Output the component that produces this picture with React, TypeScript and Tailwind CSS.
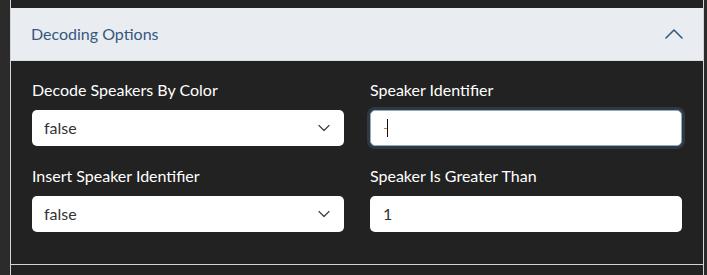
import { ChevronDown, ChevronUp } from "lucide-react";

function SelectField({ label, value }: { label: string; value: string }) {
  return (
    <div className="flex flex-col">
      <label className="text-[16px] leading-[20px] text-white mb-[10px]">
        {label}
      </label>
      <div className="h-[36px] bg-white rounded-[5px] flex items-center justify-between pl-[12px] pr-[10px]">
        <span className="text-[16px] text-[#333]">{value}</span>
        <ChevronDown size={20} strokeWidth={1.5} className="text-[#444]" />
      </div>
    </div>
  );
}

function TextField({
  label,
  value,
  focused,
}: {
  label: string;
  value: string;
  focused?: boolean;
}) {
  return (
    <div className="flex flex-col">
      <label className="text-[16px] leading-[20px] text-white mb-[10px]">
        {label}
      </label>
      <div
        className={`h-[36px] bg-white rounded-[5px] flex items-center pl-[13px] ${
          focused ? "ring-[3px] ring-[#2e3a46] border border-[#9aa8b8]" : ""
        }`}
      >
        {focused ? (
          <div className="flex items-center">
            <div className="w-[3px] h-px bg-[#c08040]" />
            <div className="w-px h-[18px] bg-[#111]" />
          </div>
        ) : (
          <span className="text-[16px] text-[#333]">{value}</span>
        )}
      </div>
    </div>
  );
}

export default function App() {
  return (
    <div
      className="w-[707px] h-[275px] bg-[#2b2b2b] flex pl-[10px] pr-[3px] overflow-hidden"
      style={{ fontFamily: "Lato, 'Noto Sans', sans-serif" }}
    >
      <div className="flex-1 bg-[#222222] border-l border-r border-[#d4d4d4] pt-[8px]">
        <div className="h-[53px] bg-[#e9edf1] border-b border-[#d8dde2] flex items-center justify-between pl-[20px] pr-[13px]">
          <span className="text-[16px] text-[#36587e]">Decoding Options</span>
          <ChevronUp size={32} strokeWidth={1.2} className="text-[#36587e]" />
        </div>
        <div className="grid grid-cols-2 gap-x-[26px] gap-y-[20px] px-[21px] pt-[19px] pb-[32px] border-b border-[#d4d4d4]">
          <SelectField label="Decode Speakers By Color" value="false" />
          <TextField label="Speaker Identifier" value="" focused />
          <SelectField label="Insert Speaker Identifier" value="false" />
          <TextField label="Speaker Is Greater Than" value="1" />
        </div>
      </div>
    </div>
  );
}
